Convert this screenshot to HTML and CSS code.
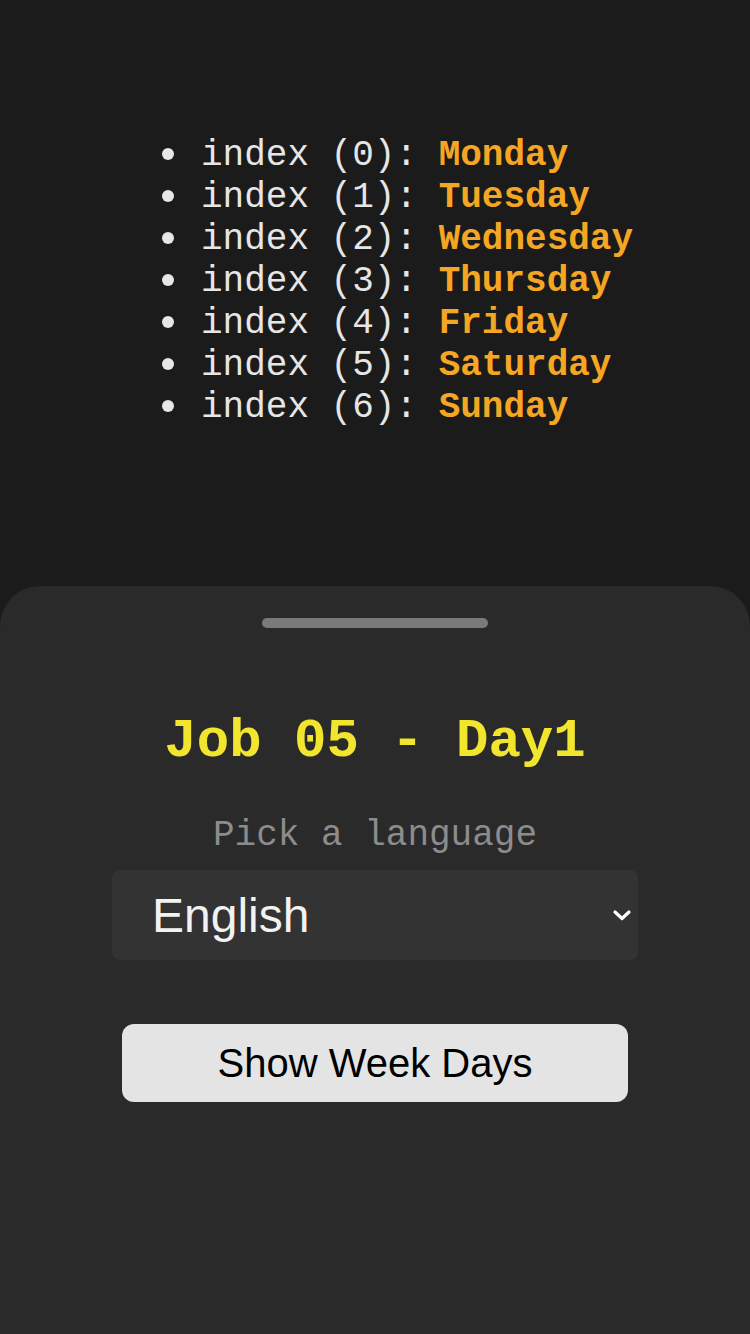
FILE: index.html
```html
<!DOCTYPE html>
<html lang="en">
<head>
<meta charset="utf-8">
<title>Job 05 - Day1</title>
<link rel="stylesheet" href="styles.css">
</head>
<body>
<div class="screen">
  <section class="top">
    <ul class="days">
      <li>index (0): <b>Monday</b></li>
      <li>index (1): <b>Tuesday</b></li>
      <li>index (2): <b>Wednesday</b></li>
      <li>index (3): <b>Thursday</b></li>
      <li>index (4): <b>Friday</b></li>
      <li>index (5): <b>Saturday</b></li>
      <li>index (6): <b>Sunday</b></li>
    </ul>
  </section>
  <section class="sheet">
    <div class="handle"></div>
    <h1 class="title">Job 05 - Day1</h1>
    <label class="label" for="lang">Pick a language</label>
    <div class="select-wrap">
      <select id="lang" class="select">
        <option>English</option>
        <option>Français</option>
      </select>
      <svg class="chevron" width="20" height="14" viewBox="0 0 20 14"><path d="M3 4 L10 10.5 L17 4" fill="none" stroke="#ffffff" stroke-width="3.2" stroke-linecap="round" stroke-linejoin="round"/></svg>
    </div>
    <button class="btn">Show Week Days</button>
  </section>
</div>
</body>
</html>
```
FILE: styles.css
```css
html, body {
  margin: 0;
  padding: 0;
  background: #1b1b1b;
}
.screen {
  height: 1334px;
  display: flex;
  flex-direction: column;
}
.top {
  height: 586px;
  box-sizing: border-box;
  padding-top: 135px;
}
.days {
  list-style: none;
  margin: 0 0 0 162px;
  padding: 0;
  font-family: "Courier New", "Nimbus Mono PS", "FreeMono", "Liberation Mono", monospace;
  font-size: 36px;
  line-height: 42px;
  color: #e6e6e6;
}
.days li::before {
  content: "";
  display: inline-block;
  width: 12px;
  height: 12px;
  border-radius: 50%;
  background: #e6e6e6;
  margin-right: 27px;
  vertical-align: 5px;
}
.days b {
  color: #f5a623;
  font-weight: bold;
}
.sheet {
  flex: 1;
  background: #2a2a2a;
  border-radius: 40px 40px 0 0;
  display: flex;
  flex-direction: column;
  align-items: center;
  padding-top: 32px;
}
.handle {
  width: 226px;
  height: 10px;
  border-radius: 5px;
  background: #7a7a7a;
}
.title {
  margin: 84px 0 0;
  font-family: "Courier New", "Nimbus Mono PS", "FreeMono", "Liberation Mono", monospace;
  font-weight: bold;
  font-size: 54px;
  line-height: 60px;
  color: #f1e62d;
}
.label {
  margin-top: 44px;
  font-family: "Courier New", "Nimbus Mono PS", "FreeMono", "Liberation Mono", monospace;
  font-size: 36px;
  line-height: 40px;
  color: #8c8c8c;
}
.select-wrap {
  position: relative;
  margin-top: 14px;
  width: 526px;
  height: 90px;
}
.select {
  appearance: none;
  -webkit-appearance: none;
  width: 100%;
  height: 100%;
  border: none;
  border-radius: 8px;
  background: #333333;
  color: #f2f2f2;
  font-family: "Liberation Sans", Arial, sans-serif;
  font-size: 48px;
  padding: 0 0 0 40px;
  outline: none;
}
.chevron {
  position: absolute;
  right: 6px;
  top: 38px;
  pointer-events: none;
}
.btn {
  margin-top: 64px;
  width: 506px;
  height: 78px;
  border: none;
  border-radius: 12px;
  background: #e4e4e4;
  color: #000;
  font-family: "Liberation Sans", Arial, sans-serif;
  font-size: 40px;
  padding: 0;
}
```
